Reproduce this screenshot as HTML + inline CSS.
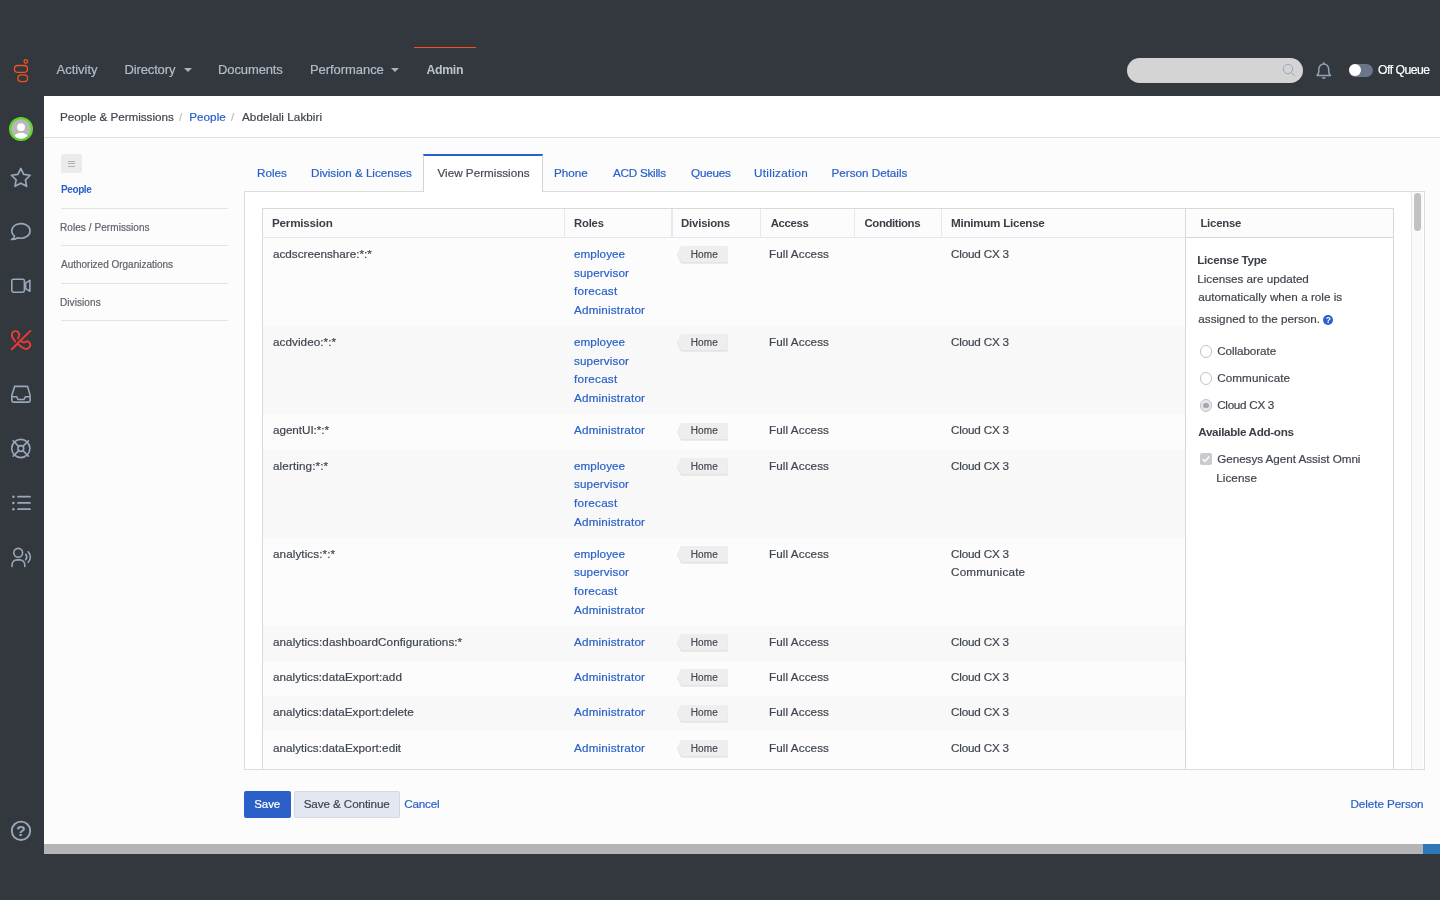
<!DOCTYPE html>
<html lang="en">
<head>
<meta charset="utf-8">
<title>Abdelali Lakbiri - People &amp; Permissions</title>
<style>
*{box-sizing:border-box;margin:0;padding:0}
html,body{width:1440px;height:900px;overflow:hidden}
body{background:#33383f;font-family:"Liberation Sans",Arial,sans-serif;font-size:12px;color:#454b54;position:relative}
a{text-decoration:none}
.abs{position:absolute;display:block}
.t{position:absolute;white-space:pre;line-height:16px;height:16px;-webkit-text-stroke:0.2px}
#txt{position:absolute;left:0;top:0;width:1440px;height:900px;will-change:transform}
#topbar{position:absolute;left:0;top:0;width:1440px;height:96px;background:#33383f}
#sidebar{position:absolute;left:0;top:96px;width:44px;height:804px;background:#33383f}
.caret{position:absolute;width:0;height:0;border-left:4px solid transparent;border-right:4px solid transparent;border-top:4.4px solid #aab4c1}
#adminline{position:absolute;left:414px;top:46.6px;width:61.7px;height:1.6px;background:#f4511f}
#search{position:absolute;left:1127.4px;top:58.2px;width:175.6px;height:25.2px;border-radius:12.6px;background:#d4d4d4}
#toggle{position:absolute;left:1348.6px;top:63.9px;width:24.4px;height:13px;border-radius:6.5px;background:#6c7689}
#knob{position:absolute;left:1348.7px;top:64.2px;width:12px;height:12.2px;border-radius:50%;background:#fff}
#main{position:absolute;left:44px;top:96px;width:1396px;height:748px;background:#fcfcfc}
#crumb{position:absolute;left:44px;top:96px;width:1396px;height:42px;background:#fff;border-bottom:1.4px solid #dedede}
#hbar{position:absolute;left:44px;top:844px;width:1379px;height:9.6px;background:#b4b4b4}
#hbarblue{position:absolute;left:1422.8px;top:844px;width:17.2px;height:9.6px;background:#2f77b9}
#burger{position:absolute;left:61px;top:154.4px;width:21px;height:18.2px;border-radius:2px;background:#ebebeb}
#burger i{position:absolute;left:6.7px;width:7.6px;height:1px;background:#b0b0b0}
.snl{position:absolute;left:61px;width:167px;height:1.2px;background:#e3e3e3}
#panel{position:absolute;left:244px;top:190.6px;width:1180.6px;height:579.4px;background:#fff;border:1.2px solid #dcdcdc}
#atab{position:absolute;left:423.4px;top:154px;width:120px;height:38px;background:#fff;border-left:1.2px solid #d4d4d4;border-right:1.2px solid #d4d4d4;border-top:2px solid #2a60c8}
#tbl{position:absolute;left:262px;top:207.6px;width:924px;height:562px;border-left:1.2px solid #d9d9d9;border-top:1.2px solid #d9d9d9;background:#fcfcfc}
#thead{position:absolute;left:263px;top:208.6px;width:922px;height:29.6px;background:#fcfcfd;border-bottom:1.4px solid #e3e7ee}
.vs{position:absolute;top:208.6px;width:1.2px;height:28.4px;background:#e6eaf0}
.stripe{position:absolute;left:263.2px;width:922px;background:#f8f8f8}
#lic{position:absolute;left:1184.8px;top:207.6px;width:209.6px;height:562px;background:#fff;border-left:1.3px solid #d8d8d8;border-right:1.3px solid #d8d8d8;border-top:1.2px solid #d8d8d8}
#lichead{position:absolute;left:1186px;top:208.8px;width:207.2px;height:29px;background:#fcfcfc;border-bottom:1.3px solid #d8d8d8}
#strack{position:absolute;left:1411.4px;top:191.8px;width:12px;height:577px;background:#fafafa;border-left:1px solid #e6e6e6}
#sthumb{position:absolute;left:1414.2px;top:192.6px;width:6.8px;height:38.2px;border-radius:3.4px;background:#c1c1c1}
.tag{position:absolute;left:680.6px;width:47.2px;height:16.6px;background:#eeeeee;border-bottom:1px solid #dcdcdc;border-radius:0 1.5px 1.5px 0}
.tag:before{content:"";position:absolute;left:-4.2px;top:0;width:0;height:0;border-top:5.6px solid transparent;border-bottom:11px solid transparent;border-right:4.2px solid #eeeeee}
.radio{position:absolute;left:1200.1px;width:12.4px;height:12.4px;border-radius:50%;border:1.2px solid #c3c3ca;background:#fff}
.radio.on{background:#e6e6ea}
.radio.on i{position:absolute;left:2.3px;top:2.3px;width:5.4px;height:5.4px;border-radius:50%;background:#a5a5b0}
#chk{position:absolute;left:1200px;top:453.2px;width:12px;height:12px;border-radius:1.8px;background:#cbcbcf}
#help{position:absolute;left:1323.3px;top:315.1px;width:10px;height:10px;border-radius:50%;background:#2a60c8}
#helpq{position:absolute;left:1323.3px;top:315.1px;width:10px;height:10px;color:#fff;font-size:8.5px;font-weight:700;line-height:10.4px;text-align:center}
#bsave{position:absolute;left:244.4px;top:791px;width:46.6px;height:27px;background:#2a60c8;border-radius:2px}
#bsc{position:absolute;left:294.2px;top:791px;width:105.8px;height:27px;background:#e3e8f0;border:1px solid #d3d8e0;border-radius:2px}
</style>
</head>
<body>
<div id="topbar"></div>
<div id="sidebar"></div>
<div id="main"></div>
<div id="crumb"></div>
<div id="hbar"></div><div id="hbarblue"></div>
<div id="adminline"></div>
<div class="caret" style="left:183.5px;top:68.1px"></div>
<div class="caret" style="left:391.3px;top:68.1px"></div>
<div id="search"></div>
<div id="toggle"></div><div id="knob"></div>

<svg class="abs" style="left:1280px;top:60px" width="20" height="20" viewBox="1280 60 20 20" fill="none" ><g stroke="#8fa4c2" stroke-width="0.9" stroke-linecap="round"><circle cx="1288" cy="69" r="4.7"/><path d="M1291.4 72.5 L1294.7 75.9"/></g></svg>
<svg class="abs" style="left:1312px;top:58px" width="24" height="24" viewBox="1312 58 24 24" fill="none" ><g stroke="#8fa2b9" stroke-width="1.5" stroke-linejoin="round" stroke-linecap="round"><path d="M1317 75.6 L1330.5 75.6 C1329.3 74.4 1328.7 73 1328.7 71.2 L1328.7 69 C1328.7 66.2 1326.5 63.9 1323.75 63.9 C1321 63.9 1318.8 66.2 1318.8 69 L1318.8 71.2 C1318.8 73 1318.2 74.4 1317 75.6 Z"/><path d="M1323.75 63.7 L1323.75 62.7"/></g><path d="M1321.6 77.3 L1325.9 77.3 C1325.7 78.4 1324.8 79 1323.75 79 C1322.7 79 1321.8 78.4 1321.6 77.3 Z" fill="#8fa2b9"/></svg>
<svg class="abs" style="left:8px;top:54px" width="30" height="34" viewBox="8 54 30 34" fill="none" ><g stroke="#f5501f" stroke-width="1.3"><circle cx="25.8" cy="61.4" r="1.75"/><rect x="14.4" y="65.5" width="13.1" height="6.9" rx="3.45"/><rect x="17.9" y="74.9" width="9.6" height="6.8" rx="3.4"/></g></svg>
<svg class="abs" style="left:6px;top:114px" width="30" height="30" viewBox="6 114 30 30" fill="none" ><circle cx="21" cy="129" r="10.9" fill="#b8b8b8" stroke="#62d32c" stroke-width="2.3"/><clipPath id="av"><circle cx="21" cy="129" r="9.7"/></clipPath><circle cx="21" cy="127.2" r="3.9" fill="#fff"/><ellipse cx="21" cy="137.6" rx="6.9" ry="4.8" fill="#fff" clip-path="url(#av)"/></svg>
<svg class="abs" style="left:6px;top:164px" width="30" height="28" viewBox="6 164 30 28" fill="none" ><polygon points="20.80,168.40 23.68,174.34 30.22,175.24 25.46,179.81 26.62,186.31 20.80,183.20 14.98,186.31 16.14,179.81 11.38,175.24 17.92,174.34" stroke="#98a7ba" stroke-width="1.7" stroke-linejoin="round"/></svg>
<svg class="abs" style="left:6px;top:218px" width="30" height="26" viewBox="6 218 30 26" fill="none" ><path d="M14.47 236.06 A9.1 7.3 0 1 1 17.79 237.76 Q15 239.7 11.5 239.5 Q14.1 238.4 14.47 236.06 Z" stroke="#98a7ba" stroke-width="1.7" stroke-linejoin="round"/></svg>
<svg class="abs" style="left:6px;top:272px" width="30" height="28" viewBox="6 272 30 28" fill="none" ><g stroke="#98a7ba" stroke-width="1.6" stroke-linejoin="round"><rect x="11.8" y="279.2" width="12.6" height="13" rx="1.6"/><path d="M25.6 283.2 L29.9 280.3 L29.9 291.3 L25.6 288.6 Z"/></g></svg>
<svg class="abs" style="left:6px;top:324px" width="30" height="32" viewBox="6 324 30 32" fill="none" ><g stroke="#ee3b33" stroke-width="1.9" stroke-linecap="round" stroke-linejoin="round"><path d="M15.3 341.4 C13.5 339.5 12 337.5 11.9 335.4 C11.8 333 13.3 331.2 15.4 331.1 C17.6 331 19.2 332.8 19.2 334.8 C19.2 336.2 18.5 337.3 17.9 338.5"/><path d="M21.4 341.2 C22.5 342.6 24.3 342.8 25.3 342 C26.8 340.9 28.4 341.3 29.4 342.5 C30.6 344 30.5 346.2 29 347.7 C27.4 349.3 24.9 349.1 22.8 347.7 C21 346.5 19.3 345.3 18.1 344.2"/><path d="M11.8 349.3 L30.4 330.9"/></g></svg>
<svg class="abs" style="left:6px;top:380px" width="30" height="28" viewBox="6 380 30 28" fill="none" ><g stroke="#98a7ba" stroke-width="1.6" stroke-linejoin="round"><path d="M14.6 386.4 L27.6 386.4 L30.1 395.4 L30.1 400.6 C30.1 401.5 29.5 402.1 28.6 402.1 L13.4 402.1 C12.5 402.1 11.8 401.5 11.8 400.6 L11.8 395.4 Z"/><path d="M11.8 396.7 L16.6 396.7 L18 399.5 L24 399.5 L25.4 396.7 L30.1 396.7"/></g></svg>
<svg class="abs" style="left:6px;top:434px" width="30" height="30" viewBox="6 434 30 30" fill="none" ><g stroke="#98a7ba" stroke-width="1.6" stroke-linecap="round"><circle cx="20.8" cy="448.5" r="9.1"/><circle cx="20.8" cy="448.5" r="2.9"/><path d="M13.2 440.9 L18.7 446.4 M28.4 440.9 L22.9 446.4 M13.2 456.1 L18.7 450.6 M28.4 456.1 L22.9 450.6"/></g></svg>
<svg class="abs" style="left:6px;top:490px" width="30" height="26" viewBox="6 490 30 26" fill="none" ><g stroke="#98a7ba" stroke-width="1.8" stroke-linecap="round"><path d="M18 496.7 H30 M18 502.9 H30 M18 509.2 H30"/></g><g fill="#98a7ba"><circle cx="13.4" cy="496.7" r="1.25"/><circle cx="13.4" cy="502.9" r="1.25"/><circle cx="13.4" cy="509.2" r="1.25"/></g></svg>
<svg class="abs" style="left:6px;top:542px" width="30" height="30" viewBox="6 542 30 30" fill="none" ><g stroke="#98a7ba" stroke-width="1.6" stroke-linecap="round"><circle cx="18.2" cy="552.8" r="4.4"/><path d="M12 566.4 V565.2 C12 561.9 14.2 559.9 17 559.9 H19.8 C22.6 559.9 24.8 561.9 24.8 565.2 V566.4"/><path d="M25.7 554.3 C26.9 555.8 26.9 558.2 25.7 559.7"/><path d="M28.2 551.9 C31 554.7 31 559.4 28.2 562.3"/></g></svg>
<svg class="abs" style="left:6px;top:816px" width="30" height="30" viewBox="6 816 30 30" fill="none" ><circle cx="21" cy="830.8" r="9.2" stroke="#98a7ba" stroke-width="1.9"/></svg>
<div id="burger"><i style="top:6.2px"></i><i style="top:8.8px"></i><i style="top:11.5px"></i></div>
<div class="snl" style="top:207.6px"></div>
<div class="snl" style="top:244.9px"></div>
<div class="snl" style="top:282.9px"></div>
<div class="snl" style="top:320.1px"></div>
<div id="panel"></div><div id="atab"></div>
<div id="tbl"></div>
<div class="stripe" style="top:326.2px;height:88.2px"></div>
<div class="stripe" style="top:449.6px;height:88.2px"></div>
<div class="stripe" style="top:626.0px;height:35.0px"></div>
<div class="stripe" style="top:696.0px;height:35.3px"></div>
<div id="thead"></div>
<div class="vs" style="left:564px"></div>
<div class="vs" style="left:671.4px"></div>
<div class="vs" style="left:759.6px"></div>
<div class="vs" style="left:853.6px"></div>
<div class="vs" style="left:941px"></div>
<div id="lic"></div><div id="lichead"></div>
<div id="strack"></div><div id="sthumb"></div>
<svg class="abs" style="left:676px;top:246.1px" width="53" height="19" viewBox="0 0 53 19"><path d="M5.2 0.4 H50.6 Q51.8 0.4 51.8 1.6 V16.2 Q51.8 17.4 50.6 17.4 H5.2 L1 8.9 Z" fill="#dadada"/><path d="M5.2 0 H50.6 Q51.8 0 51.8 1.2 V15.4 Q51.8 16.6 50.6 16.6 H5.2 L1 8.3 Z" fill="#eeeeee"/></svg>
<svg class="abs" style="left:676px;top:334.1px" width="53" height="19" viewBox="0 0 53 19"><path d="M5.2 0.4 H50.6 Q51.8 0.4 51.8 1.6 V16.2 Q51.8 17.4 50.6 17.4 H5.2 L1 8.9 Z" fill="#dadada"/><path d="M5.2 0 H50.6 Q51.8 0 51.8 1.2 V15.4 Q51.8 16.6 50.6 16.6 H5.2 L1 8.3 Z" fill="#eeeeee"/></svg>
<svg class="abs" style="left:676px;top:422.5px" width="53" height="19" viewBox="0 0 53 19"><path d="M5.2 0.4 H50.6 Q51.8 0.4 51.8 1.6 V16.2 Q51.8 17.4 50.6 17.4 H5.2 L1 8.9 Z" fill="#dadada"/><path d="M5.2 0 H50.6 Q51.8 0 51.8 1.2 V15.4 Q51.8 16.6 50.6 16.6 H5.2 L1 8.3 Z" fill="#eeeeee"/></svg>
<svg class="abs" style="left:676px;top:457.7px" width="53" height="19" viewBox="0 0 53 19"><path d="M5.2 0.4 H50.6 Q51.8 0.4 51.8 1.6 V16.2 Q51.8 17.4 50.6 17.4 H5.2 L1 8.9 Z" fill="#dadada"/><path d="M5.2 0 H50.6 Q51.8 0 51.8 1.2 V15.4 Q51.8 16.6 50.6 16.6 H5.2 L1 8.3 Z" fill="#eeeeee"/></svg>
<svg class="abs" style="left:676px;top:545.7px" width="53" height="19" viewBox="0 0 53 19"><path d="M5.2 0.4 H50.6 Q51.8 0.4 51.8 1.6 V16.2 Q51.8 17.4 50.6 17.4 H5.2 L1 8.9 Z" fill="#dadada"/><path d="M5.2 0 H50.6 Q51.8 0 51.8 1.2 V15.4 Q51.8 16.6 50.6 16.6 H5.2 L1 8.3 Z" fill="#eeeeee"/></svg>
<svg class="abs" style="left:676px;top:634.1px" width="53" height="19" viewBox="0 0 53 19"><path d="M5.2 0.4 H50.6 Q51.8 0.4 51.8 1.6 V16.2 Q51.8 17.4 50.6 17.4 H5.2 L1 8.9 Z" fill="#dadada"/><path d="M5.2 0 H50.6 Q51.8 0 51.8 1.2 V15.4 Q51.8 16.6 50.6 16.6 H5.2 L1 8.3 Z" fill="#eeeeee"/></svg>
<svg class="abs" style="left:676px;top:669.1px" width="53" height="19" viewBox="0 0 53 19"><path d="M5.2 0.4 H50.6 Q51.8 0.4 51.8 1.6 V16.2 Q51.8 17.4 50.6 17.4 H5.2 L1 8.9 Z" fill="#dadada"/><path d="M5.2 0 H50.6 Q51.8 0 51.8 1.2 V15.4 Q51.8 16.6 50.6 16.6 H5.2 L1 8.3 Z" fill="#eeeeee"/></svg>
<svg class="abs" style="left:676px;top:704.5px" width="53" height="19" viewBox="0 0 53 19"><path d="M5.2 0.4 H50.6 Q51.8 0.4 51.8 1.6 V16.2 Q51.8 17.4 50.6 17.4 H5.2 L1 8.9 Z" fill="#dadada"/><path d="M5.2 0 H50.6 Q51.8 0 51.8 1.2 V15.4 Q51.8 16.6 50.6 16.6 H5.2 L1 8.3 Z" fill="#eeeeee"/></svg>
<svg class="abs" style="left:676px;top:739.7px" width="53" height="19" viewBox="0 0 53 19"><path d="M5.2 0.4 H50.6 Q51.8 0.4 51.8 1.6 V16.2 Q51.8 17.4 50.6 17.4 H5.2 L1 8.9 Z" fill="#dadada"/><path d="M5.2 0 H50.6 Q51.8 0 51.8 1.2 V15.4 Q51.8 16.6 50.6 16.6 H5.2 L1 8.3 Z" fill="#eeeeee"/></svg>
<div class="radio" style="top:345.2px"></div><div class="radio" style="top:372.4px"></div><div class="radio on" style="top:399.4px"><i></i></div>
<div id="chk"><svg class="abs" style="left:0;top:0" width="12" height="12" viewBox="0 0 12 12" fill="none"><path d="M2.8 6.3 L5 8.4 L9.3 3.6" stroke="#fff" stroke-width="1.5"/></svg></div>
<div id="help"></div>
<div id="bsave"></div><div id="bsc"></div>
<div id="txt">
<span class="t" style="left:56.5px;top:61.7px;font-size:13px;letter-spacing:-0.02px;color:#b3bcc8">Activity</span>
<span class="t" style="left:124.5px;top:61.7px;font-size:13px;letter-spacing:-0.14px;color:#b3bcc8">Directory</span>
<span class="t" style="left:218.0px;top:61.7px;font-size:13px;letter-spacing:-0.11px;color:#b3bcc8">Documents</span>
<span class="t" style="left:310.0px;top:61.7px;font-size:13px;letter-spacing:-0.06px;color:#b3bcc8">Performance</span>
<span class="t" style="left:426.5px;top:61.7px;font-size:12.27px;font-weight:700;-webkit-text-stroke:0;letter-spacing:-0.31px;color:#bcc4cf">Admin</span>
<span class="t" style="left:1378.0px;top:61.9px;font-size:12.2px;letter-spacing:-0.50px;color:#ffffff">Off Queue</span>
<span class="t" style="left:60.0px;top:108.7px;font-size:11.7px;letter-spacing:-0.03px;color:#3f454e">People &amp; Permissions</span>
<span class="t" style="left:179.0px;top:108.7px;font-size:11.7px;color:#b9bcc0">/</span>
<a class="t" style="left:189.3px;top:108.7px;font-size:11.7px;letter-spacing:0.01px;color:#2a60c8">People</a>
<span class="t" style="left:231.0px;top:108.7px;font-size:11.7px;color:#b9bcc0">/</span>
<span class="t" style="left:242.0px;top:108.7px;font-size:11.7px;letter-spacing:0.05px;color:#3f454e">Abdelali Lakbiri</span>
<a class="t" style="left:61.0px;top:181.7px;font-size:10px;font-weight:700;-webkit-text-stroke:0;letter-spacing:-0.40px;color:#2a60c8">People</a>
<span class="t" style="left:60.0px;top:220.1px;font-size:10px;letter-spacing:0.07px;color:#5e636a">Roles / Permissions</span>
<span class="t" style="left:61.0px;top:257.0px;font-size:10px;letter-spacing:-0.01px;color:#5e636a">Authorized Organizations</span>
<span class="t" style="left:60.0px;top:294.7px;font-size:10px;letter-spacing:0.08px;color:#5e636a">Divisions</span>
<a class="t" style="left:257.0px;top:164.8px;font-size:11.7px;letter-spacing:-0.01px;color:#2a60c8">Roles</a>
<a class="t" style="left:311.0px;top:164.8px;font-size:11.7px;letter-spacing:-0.03px;color:#2a60c8">Division &amp; Licenses</a>
<span class="t" style="left:437.5px;top:164.8px;font-size:11.7px;color:#444a52">View Permissions</span>
<a class="t" style="left:554.0px;top:164.8px;font-size:11.7px;letter-spacing:0.01px;color:#2a60c8">Phone</a>
<a class="t" style="left:613.0px;top:164.8px;font-size:11.7px;letter-spacing:-0.24px;color:#2a60c8">ACD Skills</a>
<a class="t" style="left:691.0px;top:164.8px;font-size:11.7px;letter-spacing:-0.20px;color:#2a60c8">Queues</a>
<a class="t" style="left:754.0px;top:164.8px;font-size:11.7px;letter-spacing:0.32px;color:#2a60c8">Utilization</a>
<a class="t" style="left:831.5px;top:164.8px;font-size:11.7px;letter-spacing:-0.01px;color:#2a60c8">Person Details</a>
<span class="t" style="left:272.0px;top:214.8px;font-size:11.66px;font-weight:700;-webkit-text-stroke:0;letter-spacing:-0.22px;color:#3a3f47">Permission</span>
<span class="t" style="left:574.0px;top:214.8px;font-size:11.28px;font-weight:700;-webkit-text-stroke:0;letter-spacing:-0.19px;color:#3a3f47">Roles</span>
<span class="t" style="left:681.0px;top:214.8px;font-size:11.47px;font-weight:700;-webkit-text-stroke:0;letter-spacing:-0.22px;color:#3a3f47">Divisions</span>
<span class="t" style="left:770.7px;top:214.8px;font-size:11.4px;font-weight:700;-webkit-text-stroke:0;letter-spacing:-0.35px;color:#3a3f47">Access</span>
<span class="t" style="left:864.5px;top:214.8px;font-size:11.46px;font-weight:700;-webkit-text-stroke:0;letter-spacing:-0.42px;color:#3a3f47">Conditions</span>
<span class="t" style="left:951.0px;top:214.8px;font-size:11.7px;font-weight:700;-webkit-text-stroke:0;letter-spacing:-0.30px;color:#3a3f47">Minimum License</span>
<span class="t" style="left:1200.4px;top:215.1px;font-size:11.37px;font-weight:700;-webkit-text-stroke:0;letter-spacing:-0.21px;color:#3a3f47">License</span>
<span class="t" style="left:273.0px;top:246.0px;font-size:11.7px;color:#3f454e">acdscreenshare:*:*</span>
<a class="t" style="left:574.0px;top:246.0px;font-size:11.7px;letter-spacing:0.06px;color:#2a60c8">employee</a>
<a class="t" style="left:574.0px;top:265.0px;font-size:11.7px;letter-spacing:0.11px;color:#2a60c8">supervisor</a>
<a class="t" style="left:574.0px;top:283.0px;font-size:11.7px;letter-spacing:0.23px;color:#2a60c8">forecast</a>
<a class="t" style="left:574.0px;top:302.0px;font-size:11.7px;letter-spacing:0.18px;color:#2a60c8">Administrator</a>
<span class="t" style="left:690.7px;top:247.2px;font-size:10px;letter-spacing:0.14px;color:#444a52">Home</span>
<span class="t" style="left:769.0px;top:246.0px;font-size:11.7px;letter-spacing:0.08px;color:#3f454e">Full Access</span>
<span class="t" style="left:951.0px;top:246.0px;font-size:11.7px;letter-spacing:-0.19px;color:#3f454e">Cloud CX 3</span>
<span class="t" style="left:273.0px;top:334.0px;font-size:11.7px;letter-spacing:0.06px;color:#3f454e">acdvideo:*:*</span>
<a class="t" style="left:574.0px;top:334.0px;font-size:11.7px;letter-spacing:0.06px;color:#2a60c8">employee</a>
<a class="t" style="left:574.0px;top:353.0px;font-size:11.7px;letter-spacing:0.11px;color:#2a60c8">supervisor</a>
<a class="t" style="left:574.0px;top:371.0px;font-size:11.7px;letter-spacing:0.23px;color:#2a60c8">forecast</a>
<a class="t" style="left:574.0px;top:390.0px;font-size:11.7px;letter-spacing:0.18px;color:#2a60c8">Administrator</a>
<span class="t" style="left:690.7px;top:335.2px;font-size:10px;letter-spacing:0.14px;color:#444a52">Home</span>
<span class="t" style="left:769.0px;top:334.0px;font-size:11.7px;letter-spacing:0.08px;color:#3f454e">Full Access</span>
<span class="t" style="left:951.0px;top:334.0px;font-size:11.7px;letter-spacing:-0.19px;color:#3f454e">Cloud CX 3</span>
<span class="t" style="left:273.0px;top:422.0px;font-size:11.7px;letter-spacing:-0.05px;color:#3f454e">agentUI:*:*</span>
<a class="t" style="left:574.0px;top:422.0px;font-size:11.7px;letter-spacing:0.18px;color:#2a60c8">Administrator</a>
<span class="t" style="left:690.7px;top:423.2px;font-size:10px;letter-spacing:0.14px;color:#444a52">Home</span>
<span class="t" style="left:769.0px;top:422.0px;font-size:11.7px;letter-spacing:0.08px;color:#3f454e">Full Access</span>
<span class="t" style="left:951.0px;top:422.0px;font-size:11.7px;letter-spacing:-0.19px;color:#3f454e">Cloud CX 3</span>
<span class="t" style="left:273.0px;top:458.0px;font-size:11.7px;letter-spacing:0.10px;color:#3f454e">alerting:*:*</span>
<a class="t" style="left:574.0px;top:458.0px;font-size:11.7px;letter-spacing:0.06px;color:#2a60c8">employee</a>
<a class="t" style="left:574.0px;top:476.0px;font-size:11.7px;letter-spacing:0.11px;color:#2a60c8">supervisor</a>
<a class="t" style="left:574.0px;top:495.0px;font-size:11.7px;letter-spacing:0.23px;color:#2a60c8">forecast</a>
<a class="t" style="left:574.0px;top:514.0px;font-size:11.7px;letter-spacing:0.18px;color:#2a60c8">Administrator</a>
<span class="t" style="left:690.7px;top:459.2px;font-size:10px;letter-spacing:0.14px;color:#444a52">Home</span>
<span class="t" style="left:769.0px;top:458.0px;font-size:11.7px;letter-spacing:0.08px;color:#3f454e">Full Access</span>
<span class="t" style="left:951.0px;top:458.0px;font-size:11.7px;letter-spacing:-0.19px;color:#3f454e">Cloud CX 3</span>
<span class="t" style="left:273.0px;top:546.0px;font-size:11.7px;letter-spacing:0.08px;color:#3f454e">analytics:*:*</span>
<a class="t" style="left:574.0px;top:546.0px;font-size:11.7px;letter-spacing:0.06px;color:#2a60c8">employee</a>
<a class="t" style="left:574.0px;top:564.0px;font-size:11.7px;letter-spacing:0.11px;color:#2a60c8">supervisor</a>
<a class="t" style="left:574.0px;top:583.0px;font-size:11.7px;letter-spacing:0.23px;color:#2a60c8">forecast</a>
<a class="t" style="left:574.0px;top:602.0px;font-size:11.7px;letter-spacing:0.18px;color:#2a60c8">Administrator</a>
<span class="t" style="left:690.7px;top:547.2px;font-size:10px;letter-spacing:0.14px;color:#444a52">Home</span>
<span class="t" style="left:769.0px;top:546.0px;font-size:11.7px;letter-spacing:0.08px;color:#3f454e">Full Access</span>
<span class="t" style="left:951.0px;top:546.0px;font-size:11.7px;letter-spacing:-0.19px;color:#3f454e">Cloud CX 3</span>
<span class="t" style="left:951.0px;top:564.0px;font-size:11.7px;letter-spacing:0.20px;color:#3f454e">Communicate</span>
<span class="t" style="left:273.0px;top:634.0px;font-size:11.7px;letter-spacing:0.06px;color:#3f454e">analytics:dashboardConfigurations:*</span>
<a class="t" style="left:574.0px;top:634.0px;font-size:11.7px;letter-spacing:0.18px;color:#2a60c8">Administrator</a>
<span class="t" style="left:690.7px;top:635.2px;font-size:10px;letter-spacing:0.14px;color:#444a52">Home</span>
<span class="t" style="left:769.0px;top:634.0px;font-size:11.7px;letter-spacing:0.08px;color:#3f454e">Full Access</span>
<span class="t" style="left:951.0px;top:634.0px;font-size:11.7px;letter-spacing:-0.19px;color:#3f454e">Cloud CX 3</span>
<span class="t" style="left:273.0px;top:669.0px;font-size:11.7px;letter-spacing:0.04px;color:#3f454e">analytics:dataExport:add</span>
<a class="t" style="left:574.0px;top:669.0px;font-size:11.7px;letter-spacing:0.18px;color:#2a60c8">Administrator</a>
<span class="t" style="left:690.7px;top:670.2px;font-size:10px;letter-spacing:0.14px;color:#444a52">Home</span>
<span class="t" style="left:769.0px;top:669.0px;font-size:11.7px;letter-spacing:0.08px;color:#3f454e">Full Access</span>
<span class="t" style="left:951.0px;top:669.0px;font-size:11.7px;letter-spacing:-0.19px;color:#3f454e">Cloud CX 3</span>
<span class="t" style="left:273.0px;top:704.0px;font-size:11.7px;letter-spacing:0.02px;color:#3f454e">analytics:dataExport:delete</span>
<a class="t" style="left:574.0px;top:704.0px;font-size:11.7px;letter-spacing:0.18px;color:#2a60c8">Administrator</a>
<span class="t" style="left:690.7px;top:705.2px;font-size:10px;letter-spacing:0.14px;color:#444a52">Home</span>
<span class="t" style="left:769.0px;top:704.0px;font-size:11.7px;letter-spacing:0.08px;color:#3f454e">Full Access</span>
<span class="t" style="left:951.0px;top:704.0px;font-size:11.7px;letter-spacing:-0.19px;color:#3f454e">Cloud CX 3</span>
<span class="t" style="left:273.0px;top:740.0px;font-size:11.7px;letter-spacing:0.03px;color:#3f454e">analytics:dataExport:edit</span>
<a class="t" style="left:574.0px;top:740.0px;font-size:11.7px;letter-spacing:0.18px;color:#2a60c8">Administrator</a>
<span class="t" style="left:690.7px;top:741.2px;font-size:10px;letter-spacing:0.14px;color:#444a52">Home</span>
<span class="t" style="left:769.0px;top:740.0px;font-size:11.7px;letter-spacing:0.08px;color:#3f454e">Full Access</span>
<span class="t" style="left:951.0px;top:740.0px;font-size:11.7px;letter-spacing:-0.19px;color:#3f454e">Cloud CX 3</span>
<span class="t" style="left:1197.3px;top:252.0px;font-size:11.7px;font-weight:700;-webkit-text-stroke:0;letter-spacing:-0.32px;color:#3a3f47">License Type</span>
<span class="t" style="left:1197.3px;top:271.0px;font-size:11.7px;letter-spacing:-0.01px;color:#3f454e">Licenses are updated</span>
<span class="t" style="left:1198.3px;top:289.0px;font-size:11.7px;letter-spacing:0.01px;color:#3f454e">automatically when a role is</span>
<span class="t" style="left:1198.3px;top:311.0px;font-size:11.7px;letter-spacing:0.01px;color:#3f454e">assigned to the person.</span>
<span class="t" style="left:1217.2px;top:343.0px;font-size:11.7px;letter-spacing:-0.08px;color:#3f454e">Collaborate</span>
<span class="t" style="left:1217.2px;top:370.0px;font-size:11.7px;letter-spacing:0.08px;color:#3f454e">Communicate</span>
<span class="t" style="left:1217.2px;top:397.0px;font-size:11.7px;letter-spacing:-0.29px;color:#3f454e">Cloud CX 3</span>
<span class="t" style="left:1198.3px;top:424.0px;font-size:11.7px;font-weight:700;-webkit-text-stroke:0;letter-spacing:-0.34px;color:#3a3f47">Available Add-ons</span>
<span class="t" style="left:1217.2px;top:451.0px;font-size:11.7px;letter-spacing:-0.04px;color:#3f454e">Genesys Agent Assist Omni</span>
<span class="t" style="left:1216.2px;top:470.0px;font-size:11.7px;letter-spacing:0.07px;color:#3f454e">License</span>
<span class="t" style="left:254.3px;top:796.0px;font-size:11.53px;letter-spacing:-0.12px;color:#ffffff">Save</span>
<span class="t" style="left:303.7px;top:796.0px;font-size:11.7px;letter-spacing:-0.11px;color:#3f454e">Save &amp; Continue</span>
<a class="t" style="left:404.2px;top:796.0px;font-size:11.7px;letter-spacing:-0.20px;color:#2a60c8">Cancel</a>
<a class="t" style="left:1350.5px;top:796.0px;font-size:11.7px;letter-spacing:-0.08px;color:#2a60c8">Delete Person</a>
<span class="t" style="left:11px;top:823.3px;width:20px;text-align:center;font-size:15.5px;font-weight:700;color:#98a7ba">?</span>
<span id="helpq">?</span>
</div>
<div class="abs" style="left:244px;top:770px;width:1181px;height:18px;background:#fcfcfc"></div>
<div class="abs" style="left:244px;top:768.8px;width:1180.6px;height:1.2px;background:#dcdcdc"></div>
</body>
</html>
